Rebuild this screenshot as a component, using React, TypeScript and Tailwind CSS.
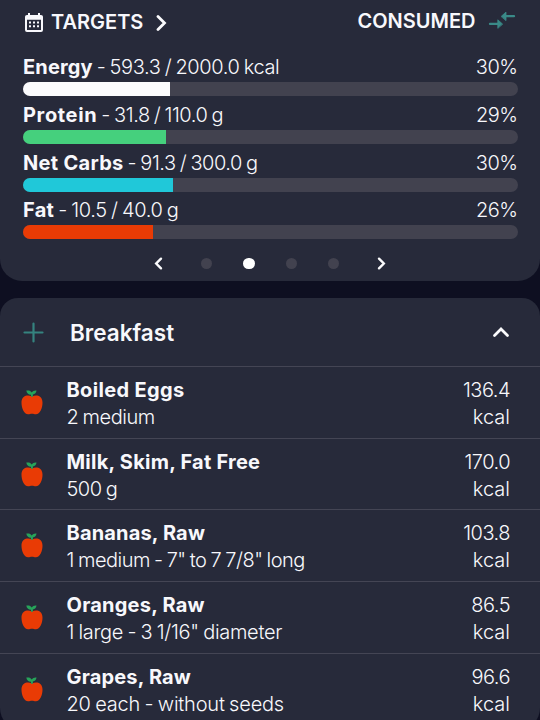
import clsx from "clsx";

type Nutrient = {
  name: string;
  amount: string;
  percent: string;
  fill: number;
  color: string;
  nameTracking: string;
  amountTracking: string;
};

const NUTRIENTS: Nutrient[] = [
  { name: "Energy", amount: "- 593.3 / 2000.0 kcal", percent: "30%", fill: 147, color: "bg-[#fbfbfd]", nameTracking: "tracking-[0.14px]", amountTracking: "tracking-[-0.39px]" },
  { name: "Protein", amount: "- 31.8 / 110.0 g", percent: "29%", fill: 143.5, color: "bg-[#45d07d]", nameTracking: "tracking-[0.65px]", amountTracking: "tracking-[-0.46px]" },
  { name: "Net Carbs", amount: "- 91.3 / 300.0 g", percent: "30%", fill: 150.5, color: "bg-[#20c8d9]", nameTracking: "tracking-[0.3px]", amountTracking: "tracking-[-0.47px]" },
  { name: "Fat", amount: "- 10.5 / 40.0 g", percent: "26%", fill: 130.5, color: "bg-[#e93b05]", nameTracking: "tracking-[0.3px]", amountTracking: "tracking-[-0.34px]" },
];

const FOODS = [
  { name: "Boiled Eggs", serving: "2 medium", kcal: "136.4", nameTracking: "tracking-[0.35px]", servingTracking: "tracking-[-0.45px]" },
  { name: "Milk, Skim, Fat Free", serving: "500 g", kcal: "170.0", nameTracking: "tracking-[0.24px]", servingTracking: "tracking-[-0.5px]" },
  { name: "Bananas, Raw", serving: "1 medium - 7\" to 7 7/8\" long", kcal: "103.8", nameTracking: "tracking-[0.16px]", servingTracking: "tracking-[-0.51px]" },
  { name: "Oranges, Raw", serving: "1 large - 3 1/16\" diameter", kcal: "86.5", nameTracking: "tracking-[0.22px]", servingTracking: "tracking-[-0.29px]" },
  { name: "Grapes, Raw", serving: "20 each - without seeds", kcal: "96.6", nameTracking: "tracking-[0.17px]", servingTracking: "tracking-[-0.2px]" },
];

const PAGES = [0, 1, 2, 3];

function CalendarIcon() {
  return (
    <svg className="h-[19px] w-[18px]" viewBox="3 1 18 20" preserveAspectRatio="none" fill="#f8f8fc" aria-hidden>
      <path d="M9 10v2H7v-2h2m4 0v2h-2v-2h2m4 0v2h-2v-2h2M9 14v2H7v-2h2m4 0v2h-2v-2h2m4 0v2h-2v-2h2M19 3a2 2 0 0 1 2 2v14a2 2 0 0 1-2 2H5a2 2 0 0 1-2-2V5a2 2 0 0 1 2-2h1V1h2v2h8V1h2v2h1m0 16V8H5v11h14Z" />
    </svg>
  );
}

function SwapIcon() {
  return (
    <svg className="h-[18px] w-[28px]" viewBox="0 0 28 18" fill="#3a8a88" stroke="#3a8a88" strokeLinejoin="round" strokeLinecap="round" aria-hidden>
      <path d="M13.4 5.2 18 1.1v8.2ZM14.400 12.900 9.800 8.800v8.200Z" strokeWidth="0.8" />
      <path d="M17 5.200h9M2 12.900h9" strokeWidth="2.3" />
    </svg>
  );
}

function Chevron({ d, className, width = 2.6 }: { d: string; className: string; width?: number }) {
  return (
    <svg className={className} fill="none" stroke="#fbfbfd" strokeWidth={width} strokeLinecap="round" strokeLinejoin="miter" aria-hidden>
      <path d={d} />
    </svg>
  );
}

function AppleIcon() {
  return (
    <svg className="h-[26px] w-[22px]" viewBox="0 0 22 26" aria-hidden>
      <path d="M11 6.400C9.500 5.800 7.800 5.400 5.900 5.600 2.500 6 .5 8.800.5 12.700c0 5.300 2.500 11.600 6.600 11.600 1.500 0 2.400-.5 3.900-.5s2.400.5 3.900.5c4.100 0 6.600-6.300 6.600-11.600 0-3.900-2-6.700-5.400-7.100-1.900-.2-3.600.2-5.100.8Z" fill="#e93b05" />
      <path d="M5.300.6c2.500-.4 4.500.2 5.400 1.900C11.700 1.100 13.300.3 15.500.6c-.2 2.300-1.600 3.700-3.600 3.900v2.200h-1.900V4.800C7.500 4.900 5.600 3.400 5.300.6Z" fill="#27a35a" />
    </svg>
  );
}

function NutrientRow({ item }: { item: Nutrient }) {
  return (
    <div className="h-[47.8px]">
      <div className="flex h-[27px] pl-[0.5px] leading-[27px] whitespace-nowrap">
        <span className={clsx("font-bold", item.nameTracking)}>{item.name}</span>
        <span className={clsx("ml-[4px] font-light [word-spacing:-1px]", item.amountTracking)}>{item.amount}</span>
        <span className="ml-auto font-light tracking-[-0.5px]">{item.percent}</span>
      </div>
      <div className="mt-[1px] h-[14px] overflow-hidden rounded-full bg-[#42424f]">
        <div className={clsx("h-full", item.color)} style={{ width: item.fill }} />
      </div>
    </div>
  );
}

export default function App() {
  return (
    <div className="flex h-[720px] w-[540px] flex-col gap-[17px] overflow-hidden bg-[#0e0f21] font-['Inter',sans-serif] text-[20px] text-[#f8f8fc]">
      <section className="h-[281px] shrink-0 rounded-b-[22px] bg-[#272a3a] px-[22.5px] pt-[9px]">
        <header className="flex h-[27px] items-center leading-[27px] font-semibold">
          <div className="ml-[2.5px] flex items-center">
            <CalendarIcon />
            <span className="ml-[8px]">TARGETS</span>
            <Chevron className="ml-[13px] h-[16px] w-[11px]" d="M2 1.500 8.500 8 2 14.500" width={2.8} />
          </div>
          <div className="-mt-[2px] ml-auto flex items-center">
            <span>CONSUMED</span>
            <span className="mr-[1.5px] mb-[3px] ml-[12.5px]"><SwapIcon /></span>
          </div>
        </header>

        <div className="mt-[18px]">
          {NUTRIENTS.map((item) => (
            <NutrientRow key={item.name} item={item} />
          ))}
        </div>

        <nav className="mt-[12px] flex items-center justify-center">
          <Chevron className="h-[13px] w-[9px]" d="M7 1.700 2.200 6.500 7 11.300" width={2.4} />
          <div className="mx-[38px] flex gap-[31px]">
            {PAGES.map((page) => (
              <span key={page} className={clsx("size-[11.300px] rounded-full", page === 1 ? "bg-white" : "bg-[#42424f]")} />
            ))}
          </div>
          <Chevron className="h-[13px] w-[9px]" d="M2 1.700 6.800 6.500 2 11.300" width={2.4} />
        </nav>
      </section>

      <section className="h-[432px] shrink-0 rounded-t-[18px] rounded-b-[22px] bg-[#272a3a]">
        <header className="flex h-[68px] items-center pr-[30px] pl-[23px]">
          <svg className="size-[21px]" viewBox="0 0 21 21" stroke="#35837f" strokeWidth="2.200" strokeLinecap="round" aria-hidden>
            <path d="M10.500 1.500v18M1.500 10.500h18" />
          </svg>
          <h2 className="mt-[2px] ml-[26px] text-[22.500px] font-semibold">Breakfast</h2>
          <Chevron className="ml-auto h-[12px] w-[18px]" d="M2.500 9.500 9 3 15.500 9.500" width={2.8} />
        </header>

        {FOODS.map((food) => (
          <div key={food.name} className="flex h-[71.700px] border-t-[1.500px] border-[#444554] pt-[10px] pr-[30px] pl-[21px] leading-[27px]">
            <span className="mt-[13px]"><AppleIcon /></span>
            <div className="ml-[23.500px] whitespace-nowrap">
              <div className={clsx("font-bold", food.nameTracking)}>{food.name}</div>
              <div className={clsx("font-light [word-spacing:-1px]", food.servingTracking)}>{food.serving}</div>
            </div>
            <div className="ml-auto text-right font-light">
              <div className="tracking-[-0.5px]">{food.kcal}</div>
              <div>kcal</div>
            </div>
          </div>
        ))}
      </section>
    </div>
  );
}
